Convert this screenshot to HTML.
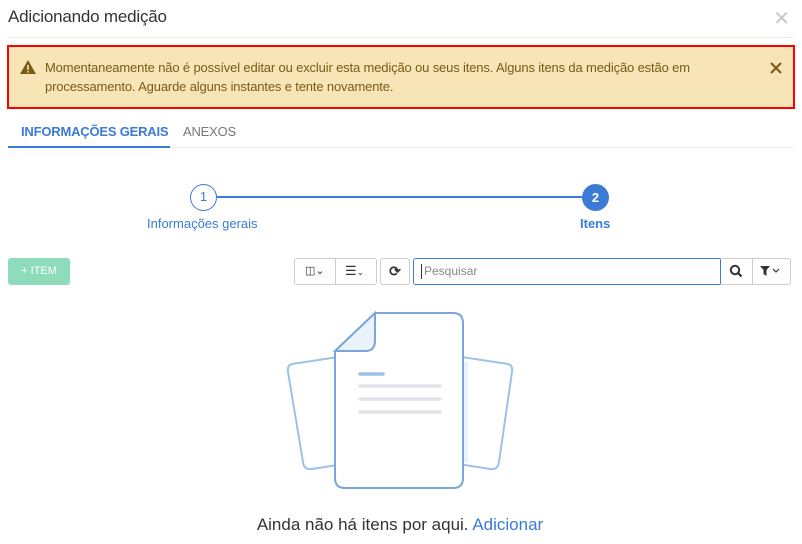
<!DOCTYPE html>
<html><head><meta charset="utf-8"><style>
*{box-sizing:border-box;margin:0;padding:0}
body{width:802px;height:544px;background:#fff;font-family:"Liberation Sans",sans-serif;position:relative;overflow:hidden;color:#333}
.abs{position:absolute}
.title{left:8px;top:7px;font-size:17px;color:#333;letter-spacing:-0.2px}
.close{right:12px;top:6px;font-size:20px;color:#c8c8c8}
.hr{left:8px;right:8px;height:1px;background:#eee}
.alert{left:7px;top:45px;width:788px;height:64px;background:#f7e5b8;border:2px solid #f00}
.alert .t{position:absolute;left:36px;top:11px;font-size:13px;line-height:19px;color:#7a5a14;letter-spacing:-0.15px;width:700px}
.tab{top:124px;font-size:13px;letter-spacing:-0.2px}
.btn{top:258px;height:27px;border:1px solid #ccc;border-radius:3px;background:#fff}
</style></head><body>
<div class="abs title">Adicionando medição</div>
<div class="abs close">✕</div>
<div class="abs hr" style="top:37px"></div>
<div class="abs alert">
<svg class="abs" style="left:11px;top:13px" width="16" height="14" viewBox="0 0 16 14"><path d="M8 0L16 14H0Z" fill="#7a5a14"/><rect x="7.2" y="5" width="1.6" height="5" fill="#f7e5b8"/><rect x="7.2" y="11" width="1.6" height="1.6" fill="#f7e5b8"/></svg>
<div class="t">Momentaneamente não é possível editar ou excluir esta medição ou seus itens. Alguns itens da medição estão em processamento. Aguarde alguns instantes e tente novamente.</div>
<svg class="abs" style="left:761px;top:15px" width="12" height="12" viewBox="0 0 12 12"><path d="M1 1L11 11M11 1L1 11" stroke="#7a5a14" stroke-width="2"/></svg>
</div>
<div class="abs tab" style="left:21px;color:#3a7bd5;font-weight:bold">INFORMAÇÕES GERAIS</div>
<div class="abs tab" style="left:183px;color:#777">ANEXOS</div>
<div class="abs hr" style="top:147px"></div>
<div class="abs" style="left:8px;top:146px;width:162px;height:2px;background:#3a7bd5"></div>
<div class="abs" style="left:216px;top:196px;width:366px;height:2px;background:#3a7bd5"></div>
<div class="abs" style="left:190px;top:184px;width:27px;height:27px;border:1.5px solid #3a7bd5;border-radius:50%;background:#fff;text-align:center;line-height:24px;font-size:13px;color:#3a7bd5">1</div>
<div class="abs" style="left:582px;top:184px;width:27px;height:27px;border-radius:50%;background:#3a7bd5;text-align:center;line-height:27px;font-size:13px;color:#fff;font-weight:bold">2</div>
<div class="abs" style="left:147px;top:216px;font-size:13px;color:#3a7bd5">Informações gerais</div>
<div class="abs" style="left:580px;top:216px;font-size:13px;color:#3a7bd5;font-weight:bold">Itens</div>
<div class="abs" style="left:8px;top:258px;width:62px;height:27px;background:#8fdcbd;border-radius:3px;color:#fff;font-size:11px;line-height:27px;text-align:center">+ ITEM</div>
<div class="abs btn" style="left:294px;width:83px"></div>
<div class="abs" style="left:335px;top:259px;width:1px;height:25px;background:#ccc"></div>
<div class="abs" style="left:305px;top:264px;font-size:11px;color:#333">◫⌄</div>
<div class="abs" style="left:345px;top:263px;font-size:13px;color:#333">☰<span style="font-size:9px">⌄</span></div>
<div class="abs btn" style="left:380px;width:30px;text-align:center;line-height:25px;font-size:14px;font-weight:bold">⟳</div>
<div class="abs" style="left:413px;top:258px;width:308px;height:27px;border:1px solid #3a7bd5;border-radius:3px 0 0 3px"></div>
<div class="abs" style="left:421px;top:264px;width:1px;height:15px;background:#333"></div>
<div class="abs" style="left:424px;top:264px;font-size:12px;color:#888">Pesquisar</div>
<div class="abs" style="left:720px;top:258px;width:71px;height:27px;border:1px solid #ccc;border-left:none;border-radius:0 3px 3px 0"></div>
<div class="abs" style="left:752px;top:259px;width:1px;height:25px;background:#ccc"></div>
<svg class="abs" style="left:729px;top:264px" width="14" height="14" viewBox="0 0 14 14"><circle cx="6" cy="6" r="4.2" stroke="#333" stroke-width="2" fill="none"/><path d="M9 9L12.5 12.5" stroke="#333" stroke-width="2.2"/></svg>
<svg class="abs" style="left:760px;top:265px" width="22" height="12" viewBox="0 0 22 12"><path d="M0 1H10L6.5 5V11L3.5 9V5Z" fill="#333"/><path d="M13 4L16 7L19 4" stroke="#333" fill="none" stroke-width="1.2"/></svg>
<svg class="abs" style="left:280px;top:305px" width="240" height="190" viewBox="280 305 240 190">
<g stroke="#9dc1ea" stroke-width="2" fill="#fff">
<path d="M292 364L338 357L350 463L312 469Q304 470 303 462L288 372Q287 365 292 364Z"/>
<path d="M508 364L462 357L452 463L490 469Q498 470 499 462L512 372Q513 365 508 364Z"/>
</g>
<rect x="337" y="360" width="6" height="105" fill="#eaf3fb"/>
<rect x="462" y="362" width="6" height="100" fill="#eaf3fb"/>
<path d="M375 313H453Q463 313 463 323V478Q463 488 453 488H345Q335 488 335 478V351Z" fill="#fff" stroke="#7aa6dc" stroke-width="2"/>
<path d="M375 313V341Q375 351 365 351H335Z" fill="#eaf3fb" stroke="#7aa6dc" stroke-width="2"/>
<g stroke-linecap="round" stroke-width="3.5"><path d="M360 374H383" stroke="#9dc1ea"/><path d="M360 386H440M360 399H440M360 412H440" stroke="#e3e4e8"/></g>
</svg>
<div class="abs" style="left:0;width:800px;top:515px;text-align:center;font-size:17px;color:#333">Ainda não há itens por aqui. <span style="color:#3a7bd5">Adicionar</span></div>
</body></html>
